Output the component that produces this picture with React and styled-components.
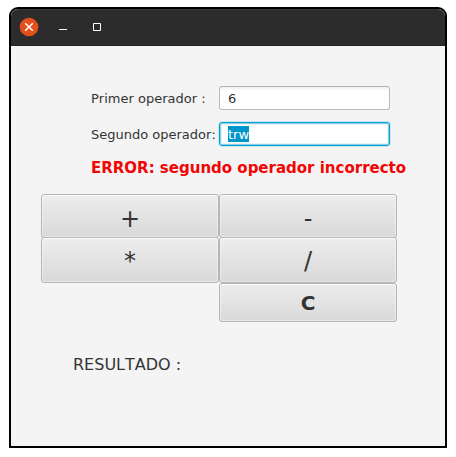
import React from "react";
import styled, { createGlobalStyle, css } from "styled-components";

const GlobalStyle = createGlobalStyle`
  * { box-sizing: border-box; }
  body { margin: 0; background: #fff; overflow: hidden; }
`;

const Window = styled.main`
  width: 438px;
  height: 441px;
  margin: 7px 0 0 9px;
  border: 2px solid #000;
  border-radius: 9px 9px 0 0;
  background: #f4f4f4;
  color: #333;
  font-family: "DejaVu Sans", sans-serif;
  font-kerning: none;
  overflow: hidden;
`;

const TitleBar = styled.header`
  display: flex;
  align-items: center;
  height: 37px;
  padding: 0 0 1px 8px;
  background: #2c2c2c;
  border-top: 1px solid #383838;
  border-bottom: 1px solid #222;
  border-radius: 7px 7px 0 0;
`;

const WindowControl = styled.button`
  display: flex;
  padding: 0;
  border: 0;
  background: none;
  margin-right: ${(p) => p.$gap || 0}px;
`;

const Content = styled.section`
  padding: 40px 0 0 30px;
`;

const Form = styled.form`
  display: grid;
  grid-template-columns: 128px 171px;
  row-gap: 12px;
  padding-left: 50px;
`;

const Label = styled.label`
  font-size: 13px;
  line-height: 26px;
  height: 24px;
  white-space: nowrap;
`;

const Field = styled.div`
  height: 24px;
  padding: 0 8px;
  border: 1px solid #bababa;
  border-top-color: #b3b3b3;
  border-radius: 3px;
  background: linear-gradient(#f2f2f2, #fff 4px);
  font-size: 13px;
  line-height: 23px;
  ${(p) =>
    p.$focused &&
    css`
      border-color: #039ed3;
      background: #fff;
      box-shadow: 0 0 0 1px #c9e7f2, inset 0 0 0 1px #8bcfe7, inset 0 0 0 2px #e6f4f9;
    `}
`;

const Selection = styled.span`
  display: inline-block;
  height: 16px;
  line-height: 17px;
  vertical-align: top;
  margin-top: 3px;
  background: #0096c9;
  color: #fff;
`;

const ErrorMessage = styled.p`
  margin: 12px 0 0 50px;
  font-size: 15px;
  font-weight: bold;
  line-height: 20px;
  white-space: nowrap;
  color: #f20505;
`;

const Keypad = styled.div`
  display: grid;
  grid-template-columns: 178px 178px;
  grid-template-rows: 43px 46px 39px;
  margin-top: 16px;
`;

const Key = styled.button`
  display: flex;
  align-items: center;
  justify-content: center;
  height: ${(p) => (p.$overlap ? "44px" : "auto")};
  padding: ${(p) => p.$drop || 0}px 0 0;
  border: 1px solid #b5b5b5;
  border-radius: 3px;
  background: linear-gradient(#ededed, #d9d9d9);
  box-shadow: inset 0 0 0 1px rgba(255, 255, 255, 0.4), inset 0 1px 0 #fafafa;
  color: #333;
  font-family: inherit;
  font-size: ${(p) => p.$size || 24}px;
  font-weight: ${(p) => (p.$bold ? "bold" : "normal")};
  line-height: 28px;
`;

const ClearKey = styled(Key)`
  grid-column: 2;
`;

const Result = styled.p`
  margin: 33px 0 0 32px;
  font-size: 16px;
  line-height: 20px;
`;

export default function App() {
  return (
    <>
      <GlobalStyle />
      <Window>
        <TitleBar>
          <WindowControl aria-label="Cerrar" $gap={20}>
            <svg width="20" height="20" viewBox="0 0 20 20">
              <circle cx="10" cy="10" r="9.3" fill="#e2501b" />
              <path d="M6.2 6.2l7.6 7.6M13.8 6.2l-7.6 7.6" stroke="#fff" strokeWidth="1.5" />
            </svg>
          </WindowControl>
          <WindowControl aria-label="Minimizar" $gap={26}>
            <svg width="8" height="8" viewBox="0 0 8 8">
              <path d="M0 6h8v1H0z" fill="#fff" />
            </svg>
          </WindowControl>
          <WindowControl aria-label="Maximizar">
            <svg width="8" height="8" viewBox="0 0 8 8">
              <path d="M.5.5h7v7h-7z" fill="none" stroke="#fff" />
            </svg>
          </WindowControl>
        </TitleBar>
        <Content>
          <Form>
            <Label>Primer operador :</Label>
            <Field>6</Field>
            <Label>Segundo operador:</Label>
            <Field $focused>
              <Selection>trw</Selection>
            </Field>
          </Form>
          <ErrorMessage>ERROR: segundo operador incorrecto</ErrorMessage>
          <Keypad>
            <Key $overlap $drop={6}>+</Key>
            <Key $overlap $drop={6}>-</Key>
            <Key $drop={2}>*</Key>
            <Key $drop={2}>/</Key>
            <ClearKey $bold $size={20}>C</ClearKey>
          </Keypad>
          <Result>RESULTADO :</Result>
        </Content>
      </Window>
    </>
  );
}
